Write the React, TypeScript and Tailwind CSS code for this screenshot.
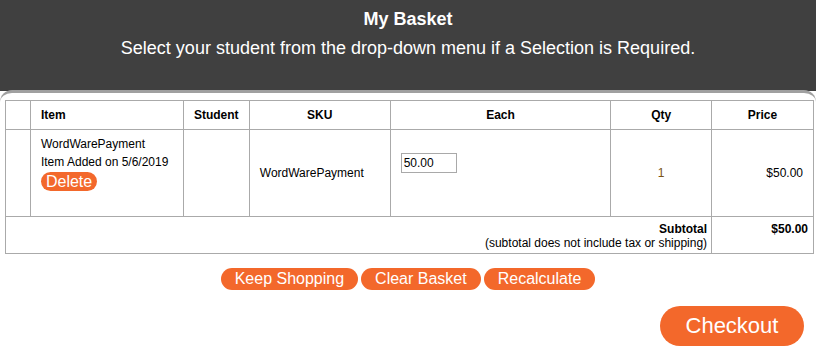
import React from 'react';

const cell = "border border-[#aaaaaa]";

export default function App() {
  return (
    <div className="w-[816px] h-[357px] bg-white text-black overflow-hidden" style={{ fontFamily: '"Liberation Sans", Arial, sans-serif' }}>
      {/* Header */}
      <div className="bg-[#404040] h-[91px] pt-[9px] text-center text-white">
        <h1 className="text-[18px] leading-[21px] font-bold">My Basket</h1>
        <p className="text-[18px] leading-[21px] mt-[8px]">Select your student from the drop-down menu if a Selection is Required.</p>
      </div>

      {/* Basket panel */}
      <div className="relative -mt-[1px] bg-white rounded-t-[12px] border-t-[3px] border-[#a0a0a0] pt-[7px] px-[5px]">
        <table className="w-[809px] border-collapse text-[12px] leading-[18px]">
          <thead>
            <tr className="h-[29px]">
              <th className={`${cell} w-[25px]`}></th>
              <th className={`${cell} w-[153px] text-left pl-[10px] font-bold`}>Item</th>
              <th className={`${cell} w-[66px] font-bold`}>Student</th>
              <th className={`${cell} w-[141px] font-bold`}>SKU</th>
              <th className={`${cell} w-[221px] font-bold`}>Each</th>
              <th className={`${cell} w-[101px] font-bold`}>Qty</th>
              <th className={`${cell} w-[102px] font-bold`}>Price</th>
            </tr>
          </thead>
          <tbody>
            <tr className="h-[87px]">
              <td className={cell}></td>
              <td className={`${cell} align-top pl-[10px] pt-[5px]`}>
                <div>WordWarePayment</div>
                <div>Item Added on 5/6/2019</div>
                <button className="mt-[1px] bg-[#f3682b] text-white text-[16px] leading-[19px] px-[5px] rounded-full">Delete</button>
              </td>
              <td className={cell}></td>
              <td className={`${cell} pl-[10px]`}>WordWarePayment</td>
              <td className={`${cell} align-top pt-[23px] pl-[10px]`}>
                <input
                  type="text"
                  defaultValue="50.00"
                  className="w-[56px] h-[20px] border border-[#a9a9a9] px-[2px] text-[12px] outline-none"
                />
              </td>
              <td className={`${cell} text-center text-[#7a5416]`}>1</td>
              <td className={`${cell} text-right pr-[10px]`}>$50.00</td>
            </tr>
            <tr className="h-[37px]">
              <td colSpan={6} className={`${cell} text-right align-top pr-[4px] pt-[5px] leading-[14px]`}>
                <div className="font-bold">Subtotal</div>
                <div>(subtotal does not include tax or shipping)</div>
              </td>
              <td className={`${cell} text-right align-top pr-[5px] pt-[5px] leading-[14px] font-bold`}>$50.00</td>
            </tr>
          </tbody>
        </table>

        <div className="flex justify-center gap-[3px] mt-[14px]">
          <button className="bg-[#f3682b] text-white text-[16px] leading-[22px] px-[14px] rounded-full">Keep Shopping</button>
          <button className="bg-[#f3682b] text-white text-[16px] leading-[22px] px-[14px] rounded-full">Clear Basket</button>
          <button className="bg-[#f3682b] text-white text-[16px] leading-[22px] px-[14px] rounded-full">Recalculate</button>
        </div>

        <div className="flex justify-end mt-[16px] pr-[7px]">
          <button className="bg-[#f3682b] text-white text-[22px] leading-[40px] w-[144px] rounded-full">Checkout</button>
        </div>
      </div>
    </div>
  );
}
